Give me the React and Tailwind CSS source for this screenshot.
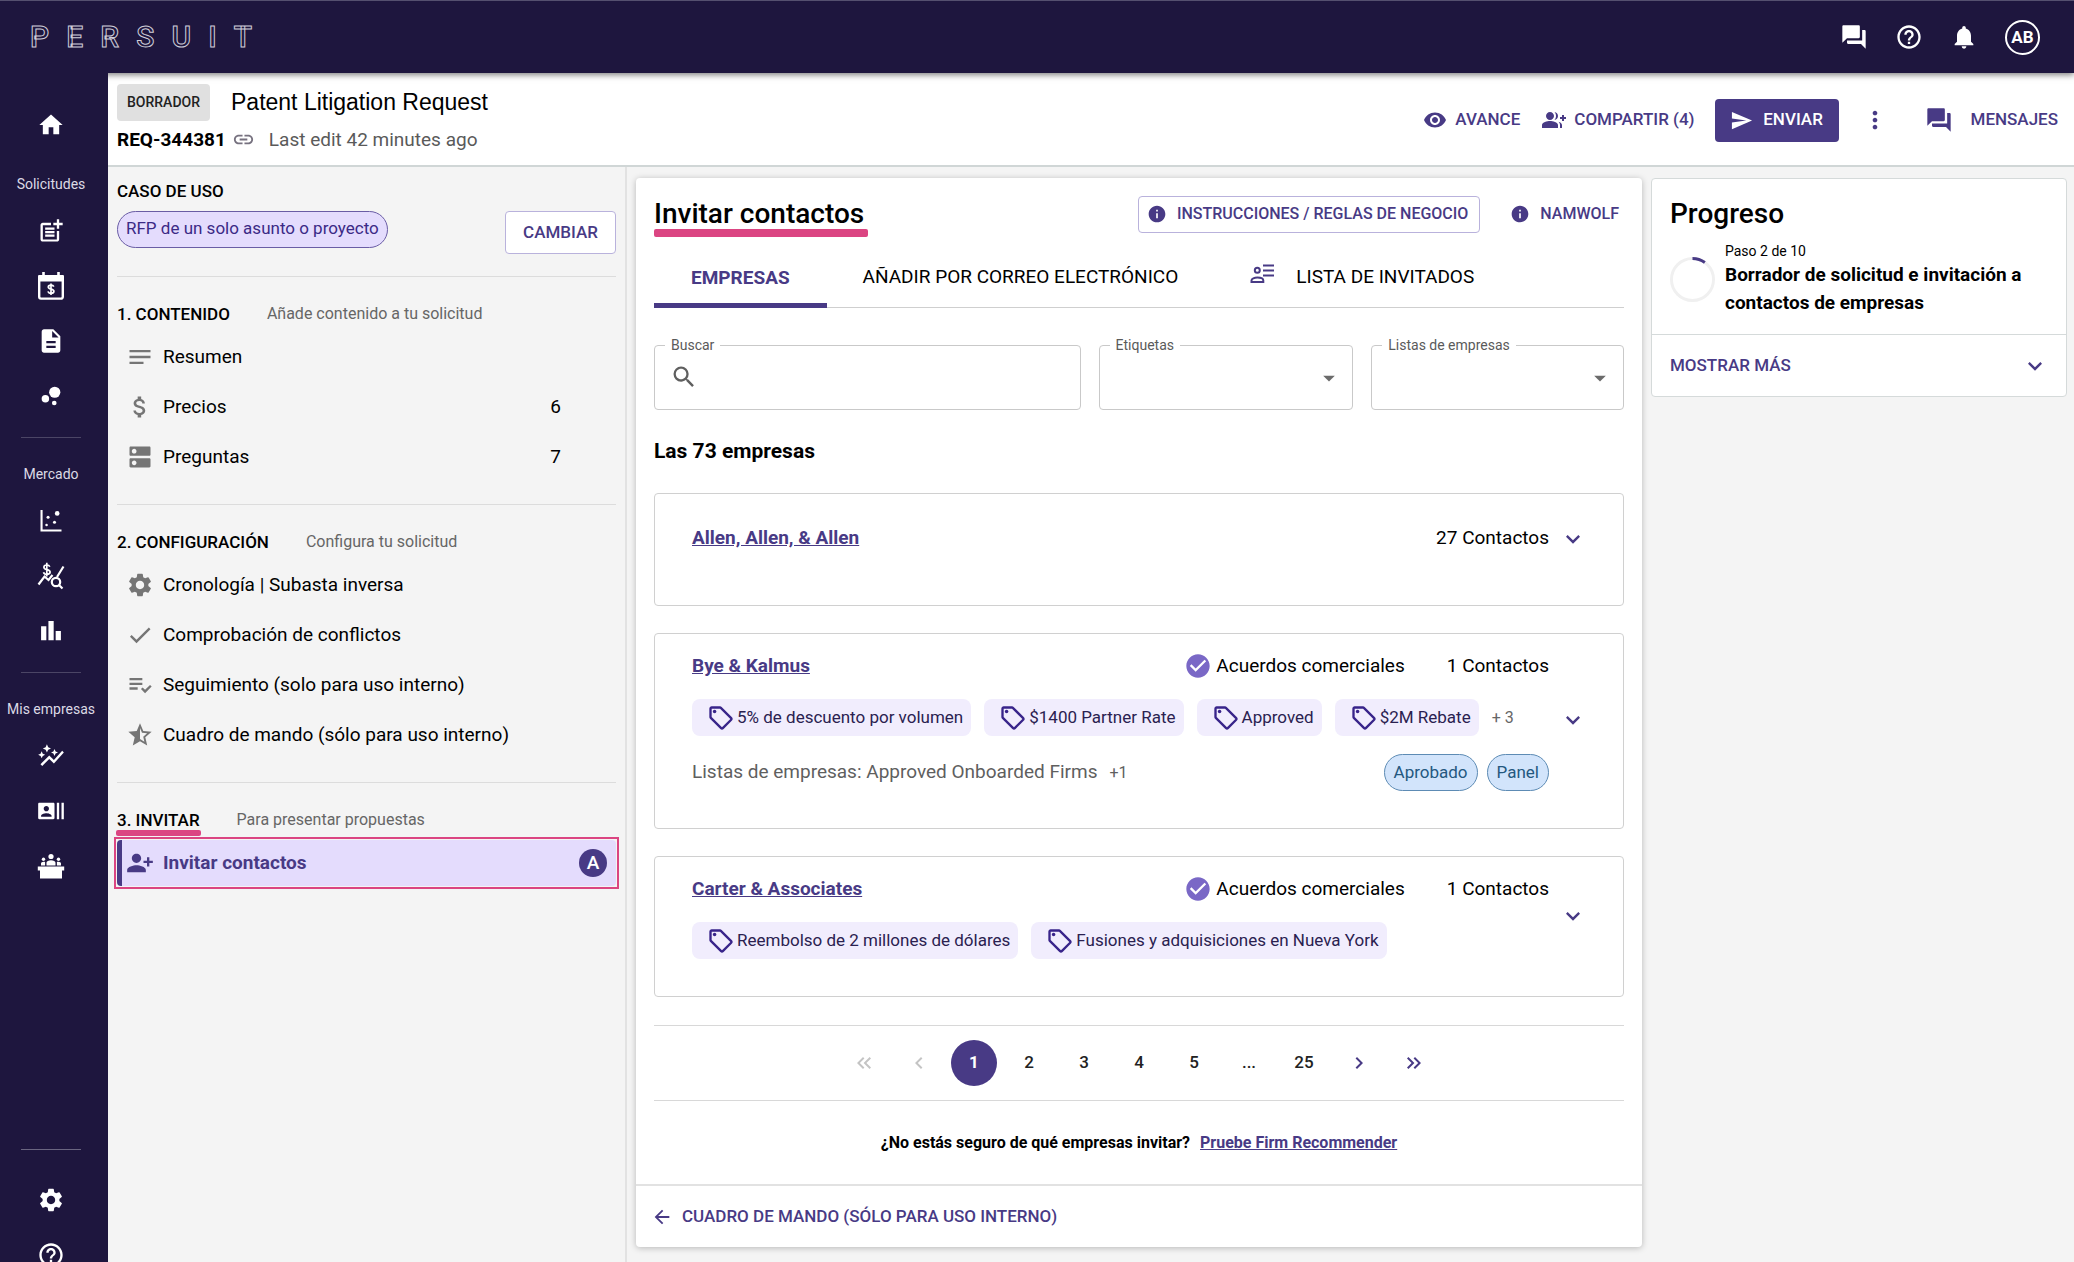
import {
  MdArrowBack,
  MdArrowDropDown,
  MdAttachMoney,
  MdAutoGraph,
  MdBubbleChart,
  MdCheck,
  MdCheckCircle,
  MdChevronLeft,
  MdChevronRight,
  MdDescription,
  MdDns,
  MdExpandMore,
  MdForum,
  MdGroupAdd,
  MdHelpOutline,
  MdHome,
  MdInfo,
  MdKeyboardDoubleArrowLeft,
  MdKeyboardDoubleArrowRight,
  MdLink,
  MdMoreVert,
  MdNotes,
  MdNotifications,
  MdOutlineSell,
  MdPersonAddAlt1,
  MdPlaylistAddCheck,
  MdPostAdd,
  MdRecentActors,
  MdSearch,
  MdSend,
  MdSettings,
  MdStarHalf,
  MdVisibility,
} from 'react-icons/md';

function CalendarDollarIcon({ className }) {
  return (
    <svg viewBox="0 0 28 28" className={className} fill="none" stroke="currentColor" aria-hidden="true">
      <path d="M2.2 4.5v20.3a1.8 1.8 0 0 0 1.8 1.8h20a1.8 1.8 0 0 0 1.8-1.8V4.5z" strokeWidth="2.4" strokeLinejoin="round" />
      <path d="M1.5 3h25v6.5h-25z" fill="currentColor" stroke="none" />
      <path d="M6.5 0v4M21.5 0v4" strokeWidth="2.6" />
      <path d="M16.8 14.6c-.4-1-1.400-1.500-2.800-1.500-1.600 0-2.700.7-2.700 1.900 0 2.900 5.600 1.300 5.600 4.300 0 1.300-1.200 2-2.900 2-1.600 0-2.700-.7-3-1.900M14 11.400v11.600" strokeWidth="1.700" />
    </svg>
  );
}

function ScatterIcon({ className }) {
  return (
    <svg viewBox="0 0 24 24" className={className} fill="currentColor" aria-hidden="true">
      <path d="M3 2.500h1.800v16.700H21V21H3z" />
      <circle cx="17.300" cy="5.500" r="2" />
      <circle cx="9.500" cy="8.800" r="1.300" />
      <circle cx="15" cy="13" r="1.300" />
      <circle cx="8.200" cy="15.500" r="1.100" />
    </svg>
  );
}

function DollarStatsIcon({ className }) {
  return (
    <svg viewBox="0 0 28 28" className={className} fill="none" stroke="currentColor" strokeWidth="2.200" aria-hidden="true">
      <path d="M1.500 22.500l6-8 4 3.500 4-5M20 15l6.500-10.500" />
      <circle cx="19" cy="20" r="4.200" />
      <path d="M22 23l3.500 3.500" />
      <path d="M12.800 4.800c-.5-1.300-1.600-1.800-3-1.800-1.700 0-2.900.8-2.900 2.200 0 3.300 6.200 1.500 6.200 4.900 0 1.500-1.300 2.300-3.200 2.300-1.800 0-3-.8-3.400-2.200M9.800.8v13.800" strokeWidth="1.700" />
    </svg>
  );
}

function BarsIcon({ className }) {
  return (
    <svg viewBox="0 0 24 24" className={className} fill="currentColor" aria-hidden="true">
      <path d="M3.500 8h4.500V20H3.500zM9.800 3.500h4.500V20H9.800zM16 12h4.500v8H16z" />
    </svg>
  );
}

function PodiumIcon({ className }) {
  return (
    <svg viewBox="0 0 28 28" className={className} fill="currentColor" aria-hidden="true">
      <path d="M.8 14.500h26.400v4H.8zM3 17.500h22v9H3z" />
      <circle cx="14" cy="4.500" r="2.600" />
      <path d="M9.500 13.500v-2.800c0-1.500 2-2.500 4.500-2.500s4.500 1 4.500 2.500v2.800z" />
      <circle cx="6.500" cy="7.200" r="1.700" />
      <circle cx="21.500" cy="7.200" r="1.700" />
      <path d="M4 13.500v-2c0-1 1.200-1.700 2.600-1.700.6 0 1.100.1 1.500.3v3.400zM24 13.500v-2c0-1-1.200-1.700-2.600-1.700-.6 0-1.100.1-1.500.3v3.400z" />
    </svg>
  );
}

function GuestListIcon({ className }) {
  return (
    <svg viewBox="0 0 24 20" className={className} fill="none" stroke="currentColor" strokeWidth="2" aria-hidden="true">
      <circle cx="7.300" cy="6.300" r="2.500" />
      <path d="M1.500 18v-1.600c0-1.700 2.900-2.800 5.900-2.800s5.900 1.100 5.900 2.800V18z" />
      <path d="M13 1.500h11M13 6.500h11M13 11.500h11" />
    </svg>
  );
}

const RAIL = [
  {
    label: 'Solicitudes',
    items: [
      { name: 'Nueva solicitud', icon: MdPostAdd },
      { name: 'Calendario', icon: CalendarDollarIcon },
      { name: 'Documentos', icon: MdDescription },
      { name: 'Burbujas', icon: MdBubbleChart },
    ],
  },
  {
    label: 'Mercado',
    items: [
      { name: 'Dispersión', icon: ScatterIcon },
      { name: 'Tarifas', icon: DollarStatsIcon },
      { name: 'Informes', icon: BarsIcon },
    ],
  },
  {
    label: 'Mis empresas',
    items: [
      { name: 'Tendencias', icon: MdAutoGraph },
      { name: 'Contactos', icon: MdRecentActors },
      { name: 'Paneles', icon: PodiumIcon },
    ],
  },
];

const SECCIONES = [
  {
    titulo: '1. CONTENIDO',
    nota: 'Añade contenido a tu solicitud',
    items: [
      { texto: 'Resumen', icon: MdNotes },
      { texto: 'Precios', icon: MdAttachMoney, total: 6 },
      { texto: 'Preguntas', icon: MdDns, total: 7 },
    ],
  },
  {
    titulo: '2. CONFIGURACIÓN',
    nota: 'Configura tu solicitud',
    items: [
      { texto: 'Cronología | Subasta inversa', icon: MdSettings },
      { texto: 'Comprobación de conflictos', icon: MdCheck },
      { texto: 'Seguimiento (solo para uso interno)', icon: MdPlaylistAddCheck },
      { texto: 'Cuadro de mando (sólo para uso interno)', icon: MdStarHalf },
    ],
  },
  {
    titulo: '3. INVITAR',
    nota: 'Para presentar propuestas',
    subrayado: true,
    items: [{ texto: 'Invitar contactos', icon: MdPersonAddAlt1, activo: true, insignia: 'A' }],
  },
];

const EMPRESAS = [
  { nombre: 'Allen, Allen, & Allen', contactos: 27 },
  {
    nombre: 'Bye & Kalmus',
    contactos: 1,
    acuerdos: true,
    etiquetas: ['5% de descuento por volumen', '$1400 Partner Rate', 'Approved', '$2M Rebate'],
    masEtiquetas: '+ 3',
    lista: 'Approved Onboarded Firms',
    masListas: '+1',
    estados: ['Aprobado', 'Panel'],
  },
  {
    nombre: 'Carter & Associates',
    contactos: 1,
    acuerdos: true,
    etiquetas: ['Reembolso de 2 millones de dólares', 'Fusiones y adquisiciones en Nueva York'],
  },
];

function TopBar() {
  return (
    <header className="relative z-20 flex h-[73px] shrink-0 items-center justify-between border-t border-[#55506f] bg-[#1e163e] pr-[34px] pl-[30px] shadow-[0_2px_6px_rgba(0,0,0,0.5)]">
      <a
        href="#inicio"
        aria-label="PERSUIT"
        className="flex w-[222px] justify-between text-[30px] leading-none font-medium text-[#1e163e] [-webkit-text-stroke:1px_#cfcdd9]"
      >
        {'PERSUIT'.split('').map((letra, i) => (
          <span key={i}>{letra}</span>
        ))}
      </a>
      <div className="flex items-center gap-[27px] text-white">
        <button aria-label="Conversaciones">
          <MdForum className="size-7" />
        </button>
        <button aria-label="Ayuda">
          <MdHelpOutline className="size-7" />
        </button>
        <button aria-label="Notificaciones">
          <MdNotifications className="size-7" />
        </button>
        <button className="size-[35px] rounded-full border-2 border-white text-[17px] leading-none font-bold">AB</button>
      </div>
    </header>
  );
}

function RailButton({ name, icon: Icon }) {
  return (
    <button aria-label={name} className="flex h-[55px] w-full shrink-0 items-center justify-center">
      <Icon className="size-7" />
    </button>
  );
}

function Rail() {
  return (
    <nav className="z-20 flex h-[calc(100vh-53px)] w-[108px] shrink-0 flex-col bg-[#1e163e] pt-6 pr-1.5 text-white">
      <RailButton name="Inicio" icon={MdHome} />
      {RAIL.map((grupo, i) => (
        <div key={grupo.label} className="flex flex-col items-center">
          {i > 0 ? <hr className="mt-3.5 mb-4 w-[60px] border-[#4b4565]" /> : <div className="h-3" />}
          <span className="h-[39px] text-[14px] leading-10 text-[#dcdae5]">{grupo.label}</span>
          {grupo.items.map((item) => (
            <RailButton key={item.name} {...item} />
          ))}
        </div>
      ))}
      <div className="mt-auto flex flex-col items-center">
        <hr className="mb-[22px] w-[60px] border-[#6a6580]" />
        <RailButton name="Ajustes" icon={MdSettings} />
        <RailButton name="Soporte" icon={MdHelpOutline} />
      </div>
    </nav>
  );
}

function RequestHeader() {
  return (
    <div className="flex h-[94px] shrink-0 items-center justify-between border-b-2 border-[#d0d6d6] bg-white pr-4 pl-[9px]">
      <div>
        <div className="flex items-center gap-[21px]">
          <span className="h-[37px] rounded-[4px] bg-[#e0e0e0] px-2.5 text-[14px] leading-[37px] font-medium text-[#222]">BORRADOR</span>
          <h1 className="font-['Liberation_Sans',sans-serif] text-[23px] leading-8">Patent Litigation Request</h1>
        </div>
        <div className="mt-1 flex items-center text-[19px] leading-[30px]">
          <span className="font-bold">REQ-344381</span>
          <MdLink className="ml-1.5 size-[23px] text-[#76717f]" />
          <span className="ml-3.5 text-[#5a5a5a]">Last edit 42 minutes ago</span>
        </div>
      </div>
      <div className="flex items-center pt-0.5 text-[17px] font-medium text-[#483a85]">
        <button className="flex items-center gap-2">
          <MdVisibility className="size-6" />
          AVANCE
        </button>
        <button className="ml-[22px] flex items-center gap-2">
          <MdGroupAdd className="size-6" />
          COMPARTIR (4)
        </button>
        <button className="ml-5 flex h-[43px] w-[124px] items-center justify-center gap-2.5 rounded-[4px] bg-[#483a85] text-white">
          <MdSend className="size-[23px]" />
          ENVIAR
        </button>
        <button aria-label="Más opciones" className="ml-[22px]">
          <MdMoreVert className="size-7" />
        </button>
        <button className="ml-9 flex items-center gap-[18px]">
          <MdForum className="size-7" />
          MENSAJES
        </button>
      </div>
    </div>
  );
}

function StepItem({ texto, icon: Icon, total, activo, insignia }) {
  if (activo) {
    return (
      <div className="relative">
        <a
          href="#paso"
          aria-current="step"
          className="flex h-[46px] items-center rounded-[4px] border-l-[5px] border-[#483a85] bg-[#e4dcfd] pr-[9px] pl-1 text-[19px] font-bold text-[#483a85]"
        >
          <Icon className="size-7 shrink-0" />
          <span className="ml-[9px] flex-1">{texto}</span>
          <span className="flex size-7 items-center justify-center rounded-full bg-[#483a85] font-medium text-white">{insignia}</span>
        </a>
        <div className="pointer-events-none absolute -inset-[3px] border-2 border-[#db4582]" />
      </div>
    );
  }
  return (
    <a href="#paso" className="flex h-[46px] items-center pr-[55px] pl-[9px] text-[19px]">
      <Icon className="size-7 shrink-0 text-[#757575]" />
      <span className="ml-[9px] flex-1">{texto}</span>
      {total && <span>{total}</span>}
    </a>
  );
}

function StepsPanel() {
  return (
    <aside className="w-[519px] shrink-0 border-r-2 border-[#e2e2e2] pt-3 pr-[9px] pl-[9px]">
      <h2 className="text-[17px] leading-6 font-medium">CASO DE USO</h2>
      <div className="mt-2 mb-[22px] flex items-start justify-between">
        <span className="h-[37px] rounded-full border border-[#6a5da5] bg-[#e4dcfd] px-2 text-[17px] leading-[33px] text-[#3b2a86]">
          RFP de un solo asunto o proyecto
        </span>
        <button className="h-[43px] w-[111px] rounded-[4px] border border-[#b9b2dc] bg-white text-[17px] font-medium text-[#483a85]">
          CAMBIAR
        </button>
      </div>
      {SECCIONES.map((seccion) => (
        <section key={seccion.titulo} className="border-t border-[#dcdcdc] pt-[25px] pb-6">
          <div className="mb-2 flex items-center gap-[37px] leading-6">
            <h2 className="relative text-[17px] font-medium">
              {seccion.titulo}
              {seccion.subrayado && <span className="absolute -inset-x-px -bottom-1 h-1.5 rounded-[2px] bg-[#db4582]" />}
            </h2>
            <p className="text-[16px] text-[#666]">{seccion.nota}</p>
          </div>
          <div className="flex flex-col gap-1">
            {seccion.items.map((item) => (
              <StepItem key={item.texto} {...item} />
            ))}
          </div>
        </section>
      ))}
    </aside>
  );
}

function FloatLabel({ htmlFor, children }) {
  return (
    <label htmlFor={htmlFor} className="absolute -top-[11px] left-[11px] bg-white px-1.5 text-[14px] leading-[22px] text-[#5a5a5a]">
      {children}
    </label>
  );
}

function SelectField({ id, label }) {
  return (
    <div className="relative">
      <select id={id} className="h-[65px] w-full appearance-none rounded-[4px] border border-[#c9c9c9] bg-white px-4">
        <option value=""></option>
      </select>
      <FloatLabel htmlFor={id}>{label}</FloatLabel>
      <MdArrowDropDown className="pointer-events-none absolute top-[19px] right-2.5 size-7 text-[#6b6b6b]" />
    </div>
  );
}

function EmpresaCard({ empresa }) {
  const { nombre, contactos, acuerdos, etiquetas, masEtiquetas, lista, masListas, estados } = empresa;

  return (
    <article className="flex min-h-[113px] items-center rounded-[4px] border border-[#d0d0d0] pt-[15px] pr-9 pb-[37px] pl-[37px]">
      <div className="flex flex-1 flex-col gap-4">
        <div className="flex h-[34px] items-center text-[19px]">
          <a href="#empresa" className="font-bold text-[#483a85] underline">
            {nombre}
          </a>
          <div className="ml-auto flex items-center">
            {acuerdos && (
              <span className="mr-[42px] flex items-center gap-1">
                <MdCheckCircle className="size-7 text-[#7a68c6]" />
                Acuerdos comerciales
              </span>
            )}
            <span>{contactos} Contactos</span>
          </div>
        </div>
        {etiquetas && (
          <div className="flex items-center gap-[13px]">
            {etiquetas.map((etiqueta) => (
              <span key={etiqueta} className="flex h-[37px] items-center gap-0.5 rounded-lg bg-[#f1edfd] pr-2 pl-[15px] text-[17px] text-[#2a2150]">
                <MdOutlineSell className="size-7 text-[#38248a]" />
                {etiqueta}
              </span>
            ))}
            {masEtiquetas && <span className="text-[16px] text-[#666]">{masEtiquetas}</span>}
          </div>
        )}
        {lista && (
          <div className="mt-0.5 flex items-center text-[19px] text-[#5f5f5f]">
            <span>Listas de empresas: {lista}</span>
            <span className="ml-3 text-[16px]">{masListas}</span>
            <div className="ml-auto flex gap-[9px]">
              {estados.map((estado) => (
                <span key={estado} className="h-[37px] rounded-full border border-[#5d8bb4] bg-[#d2e4fb] px-[9px] text-[17px] leading-[35px] text-[#24587f]">
                  {estado}
                </span>
              ))}
            </div>
          </div>
        )}
      </div>
      <button aria-label={`Mostrar ${nombre}`} className="ml-2.5 text-[#483a85]">
        <MdExpandMore className="size-7" />
      </button>
    </article>
  );
}

function Pagination() {
  return (
    <nav aria-label="Paginación" className="mt-7 flex h-[76px] items-center justify-center gap-[9px] border-y border-[#d8d8d8] text-[17px] font-medium text-[#222]">
      <button aria-label="Primera" disabled className="flex size-[46px] items-center justify-center text-[#c4c4c4]">
        <MdKeyboardDoubleArrowLeft className="size-6" />
      </button>
      <button aria-label="Anterior" disabled className="flex size-[46px] items-center justify-center text-[#c4c4c4]">
        <MdChevronLeft className="size-6" />
      </button>
      <button aria-current="page" className="size-[46px] rounded-full bg-[#483a85] font-bold text-white">
        1
      </button>
      {['2', '3', '4', '5', '...', '25'].map((pagina) => (
        <button key={pagina} className="size-[46px]">
          {pagina}
        </button>
      ))}
      <button aria-label="Siguiente" className="flex size-[46px] items-center justify-center text-[#483a85]">
        <MdChevronRight className="size-6" />
      </button>
      <button aria-label="Última" className="flex size-[46px] items-center justify-center text-[#483a85]">
        <MdKeyboardDoubleArrowRight className="size-6" />
      </button>
    </nav>
  );
}

function InvitePanel() {
  return (
    <main className="min-w-0 flex-1 self-start rounded-[4px] bg-white shadow-[0_1px_6px_rgba(0,0,0,0.25)]">
      <div className="px-[18px] pt-4">
        <div className="flex h-10 items-center">
          <h2 className="relative text-[28px] leading-10 font-medium">
            Invitar contactos
            <span className="absolute left-0 -right-1 -bottom-[3px] h-2 rounded-[2px] bg-[#db4582]" />
          </h2>
          <button className="ml-auto flex h-[37px] items-center gap-2.5 rounded-[4px] border border-[#b9b2dc] pr-[11px] pl-2 text-[16px] font-medium text-[#483a85]">
            <MdInfo className="size-5" />
            INSTRUCCIONES / REGLAS DE NEGOCIO
          </button>
          <button className="ml-[30px] flex items-center gap-2.5 pr-[5px] text-[16px] font-medium text-[#483a85]">
            <MdInfo className="size-5" />
            NAMWOLF
          </button>
        </div>

        <div role="tablist" className="mt-[14px] flex h-[60px] border-b border-[#cfcfcf] text-[19px]">
          <button role="tab" aria-selected="true" className="-mb-px h-[60px] border-b-[5px] border-[#483a85] px-[37px] pt-[5px] font-bold text-[#483a85]">
            EMPRESAS
          </button>
          <button role="tab" aria-selected="false" className="px-9">
            AÑADIR POR CORREO ELECTRÓNICO
          </button>
          <button role="tab" aria-selected="false" className="flex items-center gap-[22px] px-9">
            <GuestListIcon className="-mt-2 h-5 w-6 text-[#483a85]" />
            LISTA DE INVITADOS
          </button>
        </div>

        <div className="mt-[37px] grid grid-cols-[427fr_255fr_253fr] gap-[18px]">
          <div className="relative">
            <input id="buscar" type="text" className="h-[65px] w-full rounded-[4px] border border-[#c9c9c9] pr-4 pl-[50px] text-[19px]" />
            <FloatLabel htmlFor="buscar">Buscar</FloatLabel>
            <MdSearch className="pointer-events-none absolute top-[18px] left-4 size-7 text-[#5f5f5f]" />
          </div>
          <SelectField id="etiquetas" label="Etiquetas" />
          <SelectField id="listas" label="Listas de empresas" />
        </div>

        <h3 className="mt-[26px] mb-[27px] text-[21px] leading-[30px] font-bold">Las 73 empresas</h3>

        <div className="flex flex-col gap-[27px]">
          {EMPRESAS.map((empresa) => (
            <EmpresaCard key={empresa.nombre} empresa={empresa} />
          ))}
        </div>

        <Pagination />

        <p className="flex h-[83px] items-center justify-center gap-2.5 text-[16px] font-bold">
          ¿No estás seguro de qué empresas invitar?
          <a href="#recomendador" className="text-[#483a85] underline">
            Pruebe Firm Recommender
          </a>
        </p>
      </div>
      <div className="flex h-[63px] items-center border-t-2 border-[#e2e2e2] px-[15px]">
        <a href="#cuadro" className="flex items-center gap-[9px] text-[17px] font-medium text-[#483a85]">
          <MdArrowBack className="size-[22px]" />
          CUADRO DE MANDO (SÓLO PARA USO INTERNO)
        </a>
      </div>
    </main>
  );
}

function ProgressPanel() {
  return (
    <aside className="w-[416px] shrink-0 self-start rounded-[4px] border border-[#d5dada] bg-white">
      <div className="px-[18px] pt-[15px] pb-[17px]">
        <h2 className="text-[28px] leading-10 font-medium">Progreso</h2>
        <div className="mt-[7px] flex items-center gap-2.5">
          <svg viewBox="0 0 46 46" className="size-[45px] shrink-0 -rotate-90" fill="none" strokeWidth="3" role="img" aria-label="Progreso 10%">
            <circle cx="23" cy="23" r="21.500" stroke="#f0f0f0" />
            <circle cx="23" cy="23" r="21.500" stroke="#483a85" pathLength="100" strokeDasharray="10 90" />
          </svg>
          <div>
            <p className="text-[14px] leading-5">Paso 2 de 10</p>
            <p className="text-[19px] leading-7 font-bold">Borrador de solicitud e invitación a contactos de empresas</p>
          </div>
        </div>
      </div>
      <button className="flex h-[62px] w-full items-center justify-between border-t border-[#d5dada] pr-[17px] pl-[18px] text-[17px] font-medium text-[#483a85]">
        MOSTRAR MÁS
        <MdExpandMore className="size-7" />
      </button>
    </aside>
  );
}

export default function App() {
  return (
    <div className="flex h-screen flex-col overflow-hidden bg-[#f4f4f4] font-['Roboto',sans-serif] text-black">
      <TopBar />
      <div className="flex min-h-0 flex-1">
        <Rail />
        <div className="flex min-w-0 flex-1 flex-col">
          <RequestHeader />
          <div className="flex min-h-0 flex-1">
            <StepsPanel />
            <div className="flex min-w-0 flex-1 gap-[9px] pt-[11px] pr-[7px] pl-[9px]">
              <InvitePanel />
              <ProgressPanel />
            </div>
          </div>
        </div>
      </div>
    </div>
  );
}
